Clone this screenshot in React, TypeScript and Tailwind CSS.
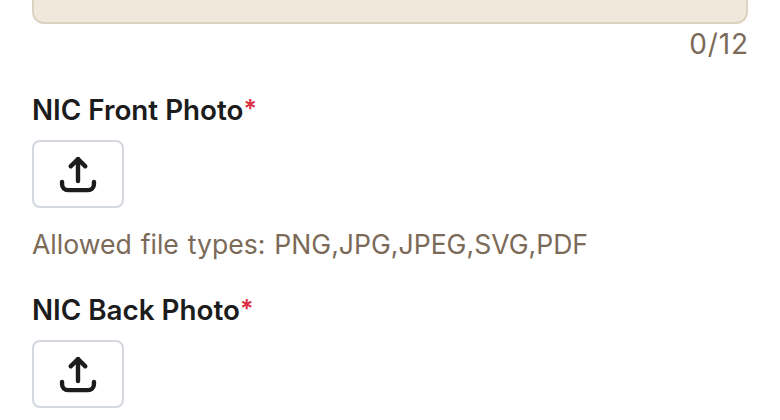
function UploadIcon() {
  return (
    <svg width="44" height="44" viewBox="0 0 24 24" fill="none" stroke="currentColor" strokeWidth="2.4" strokeLinecap="round" strokeLinejoin="round">
      <path d="M12 15.8V3.9" />
      <path d="M8 7.8 12 3.9l4 3.9" />
      <path d="M3.3 16.4v1.2a3.2 3.2 0 0 0 3.2 3.2h11a3.2 3.2 0 0 0 3.2-3.2v-1.2" />
    </svg>
  );
}

function UploadField({ label }: { label: string }) {
  return (
    <div>
      <div className="text-[27.8px] leading-[36px] font-semibold text-[#1c1c1c]">
        {label}
        <span className="align-[2px] text-[25px] leading-none text-[#dc2f45]">*</span>
      </div>
      <button
        type="button"
        className="mt-[12px] flex h-[68px] w-[92px] items-center justify-center rounded-lg border-2 border-[#d3d8de] bg-white text-[#1c1c1c]"
      >
        <UploadIcon />
      </button>
    </div>
  );
}

export default function App() {
  return (
    <div className="h-[420px] w-[780px] overflow-hidden bg-white px-8 font-['Inter',sans-serif]">
      <div className="-mt-[2px] h-[26px] rounded-b-xl border-2 border-t-0 border-[#dcd3c0] bg-[#f0e8da]" />
      <div className="-mr-px mt-[2px] text-right text-[28px] leading-[36px] tracking-[0.9px] text-[#7b6a58]">0/12</div>
      <div className="mt-[30px]">
        <UploadField label="NIC Front Photo" />
      </div>
      <p className="mt-[18px] text-[26.6px] leading-[36px] [word-spacing:1.4px] text-[#7b6a58]">
        Allowed file types: PNG,JPG,JPEG,SVG,PDF
      </p>
      <div className="mt-[30px]">
        <UploadField label="NIC Back Photo" />
      </div>
    </div>
  );
}
